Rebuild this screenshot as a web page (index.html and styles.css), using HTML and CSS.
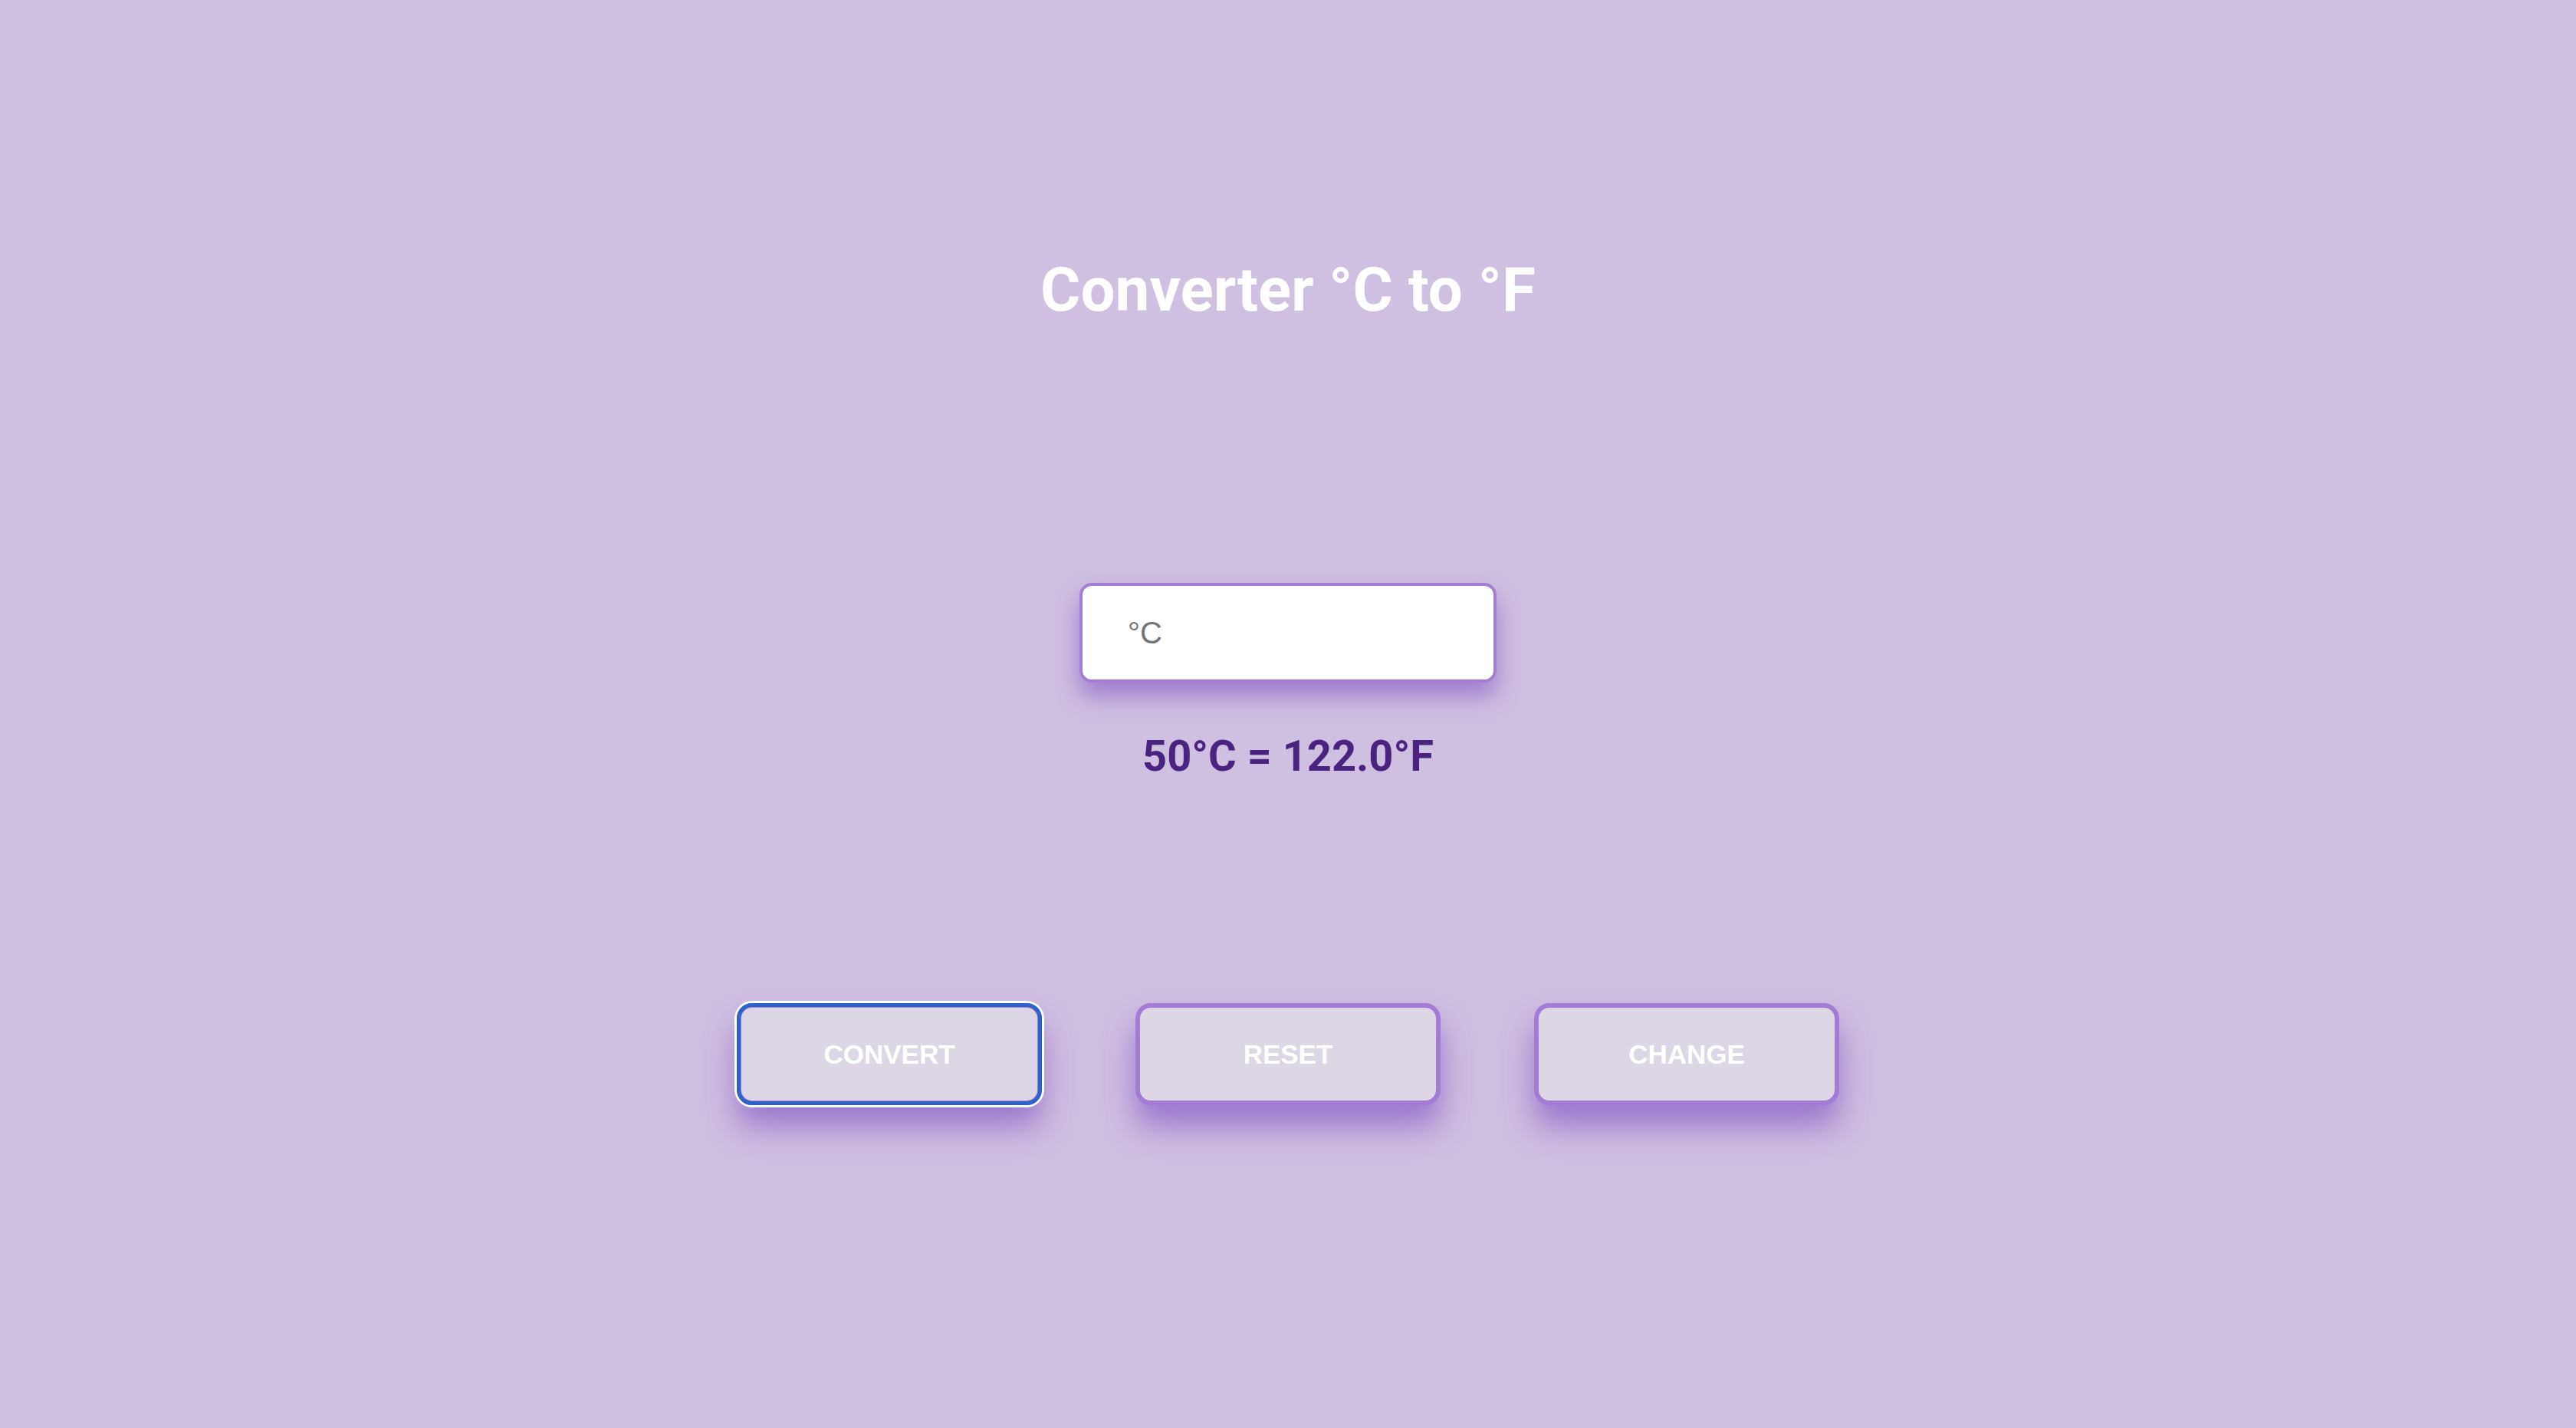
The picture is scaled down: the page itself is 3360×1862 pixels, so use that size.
FILE: index.html
```html
<!DOCTYPE html>
<html lang="en">
<head>
<meta charset="utf-8">
<title>Converter °C to °F</title>
<link rel="stylesheet" href="styles.css">
</head>
<body>
<main class="app">
  <h1 class="title">Converter °C to °F</h1>
  <input class="temp-input" type="text" placeholder="°C">
  <p class="result">50°C = 122.0°F</p>
  <div class="actions">
    <button class="btn btn-focus" type="button">CONVERT</button>
    <button class="btn" type="button">RESET</button>
    <button class="btn" type="button">CHANGE</button>
  </div>
</main>
</body>
</html>
```

FILE: styles.css
```css
html, body {
  margin: 0;
  padding: 0;
}

body {
  background: #cfbfe1;
  min-height: 1862px;
  font-family: Roboto, "Liberation Sans", Arial, sans-serif;
}

.app {
  display: flex;
  flex-direction: column;
  align-items: center;
  padding-top: 330px;
}

.title {
  margin: 0;
  font-size: 80px;
  line-height: 96px;
  font-weight: 700;
  color: #ffffff;
}

.temp-input {
  margin-top: 334px;
  box-sizing: border-box;
  width: 544px;
  height: 130px;
  border: 4px solid #a37cd4;
  border-radius: 16px;
  background: #ffffff;
  padding: 0 0 0 59px;
  font-family: "Liberation Sans", Arial, sans-serif;
  font-size: 40px;
  color: #333;
  outline: none;
  box-shadow: 0 18px 30px rgba(128, 80, 196, 0.6);
}

.temp-input::placeholder {
  color: #747474;
}

.result {
  margin: 62px 0 0;
  font-size: 56px;
  line-height: 68px;
  font-weight: 700;
  color: #4a2381;
}

.actions {
  margin-top: 288px;
  display: flex;
  gap: 122px;
}

.btn {
  box-sizing: border-box;
  width: 398px;
  height: 133px;
  border: 6px solid #a47cd6;
  border-radius: 20px;
  background: #ddd6e4;
  color: #ffffff;
  font-family: "Liberation Sans", Arial, sans-serif;
  font-weight: 700;
  font-size: 35px;
  padding: 0;
  cursor: pointer;
  box-shadow: 0 28px 40px rgba(124, 74, 194, 0.62);
}

.btn-focus {
  outline: 5px solid #2c62c9;
  outline-offset: -5px;
  box-shadow: 0 0 0 3px #ffffff, 0 28px 40px rgba(124, 74, 194, 0.62);
}
```
